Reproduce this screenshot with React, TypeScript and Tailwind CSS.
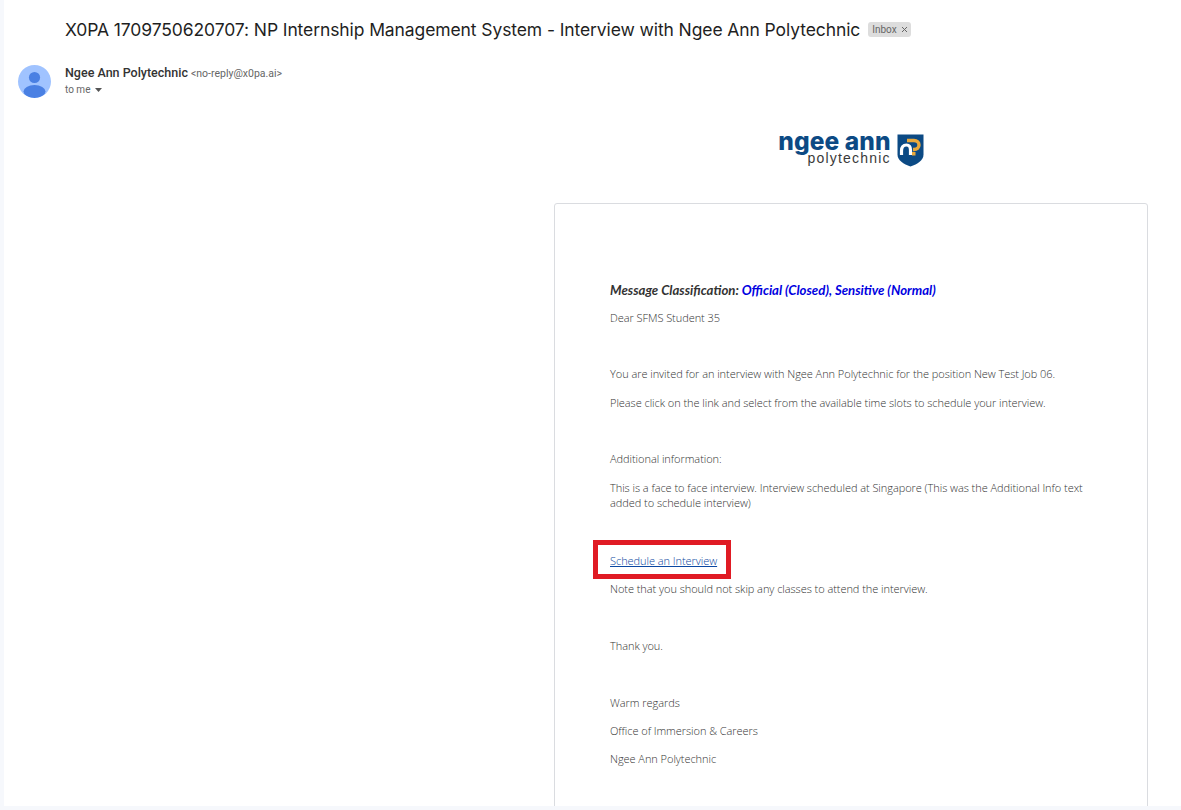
export default function App() {
  const body = "font-['Open_Sans',sans-serif] font-light text-[11px] tracking-[-0.05px] leading-[15px] text-[#333]";
  return (
    <div className="w-[1181px] h-[810px] overflow-hidden bg-[#f6f8fc] pl-[4px] pb-[4px]">
      <div className="h-full bg-white flex flex-col overflow-hidden">
        <div className="flex items-center pl-[61px] pt-[19px] h-[41px] shrink-0">
          <h1 className="font-['Inter',sans-serif] text-[17.5px] tracking-[-0.1px] leading-[22px] font-normal text-[#1f1f1f] whitespace-nowrap">
            X0PA 1709750620707: NP Internship Management System - Interview with Ngee Ann Polytechnic
          </h1>
          <span className="ml-[8px] mt-[-1px] flex items-center h-[15px] pl-[4px] pr-[3px] rounded-[3px] bg-[#dddddd] text-[#666] text-[10px] font-['Roboto',sans-serif]">
            Inbox
            <svg width="7" height="7" viewBox="0 0 7 7" className="ml-[4px]" fill="none" stroke="#666" strokeWidth="1">
              <path d="M1 1l5 5M6 1l-5 5" />
            </svg>
          </span>
        </div>
        <div className="flex pl-[14px] pt-[24px] shrink-0">
          <svg width="33" height="33" viewBox="0 0 33 33" className="shrink-0">
            <defs>
              <clipPath id="avatar"><circle cx="16.5" cy="16.5" r="16.5" /></clipPath>
            </defs>
            <g clipPath="url(#avatar)">
              <rect width="33" height="33" fill="#a0c3ff" />
              <circle cx="16.5" cy="12.5" r="5.6" fill="#4a80e3" />
              <ellipse cx="16.5" cy="26.5" rx="11" ry="6.5" fill="#4a80e3" />
            </g>
          </svg>
          <div className="ml-[14px] font-['Roboto',sans-serif]">
            <div className="flex items-baseline h-[16px] leading-[16px] whitespace-nowrap">
              <span className="text-[12.5px] font-medium text-[#333]">Ngee Ann Polytechnic</span>
              <span className="ml-[3px] text-[10.5px] text-[#666]">&lt;no-reply@x0pa.ai&gt;</span>
            </div>
            <div className="flex items-center h-[16px] text-[10px] text-[#666]">
              to me
              <svg width="7" height="4" viewBox="0 0 7 4" className="ml-[5px] mt-[2px]"><path d="M0 0h7L3.5 4z" fill="#555" /></svg>
            </div>
          </div>
        </div>
        <div className="ml-[550px] w-[594px] flex flex-col shrink-0">
          <div className="flex justify-center items-start h-[105px] pt-[36px]">
            <div className="flex items-start">
              <div className="flex flex-col items-end mt-[-4px]">
                <span className="font-['Inter',sans-serif] font-extrabold text-[24.5px] leading-[22px] tracking-[0.1px] text-[#0c4a84]">ngee ann</span>
                <span className="font-['Liberation_Sans',sans-serif] text-[14px] leading-[14px] tracking-[1.2px] text-[#3a3a3a] mt-[-1px]">polytechnic</span>
              </div>
              <svg width="27" height="33" viewBox="0 0 27 33" className="ml-[6px]">
                <path d="M0.5 0.5h26v20c0 6-6 9.500-13 12-7-2.500-13-6-13-12z" fill="#0c4a84" />
                <path d="M4.500 21v-4c0-4 2-6 5-6s4 2 4 5v5" fill="none" stroke="#fff" strokeWidth="3.200" />
                <path d="M10 6.500h7c3 0 5 2 5 4.500s-2 4.500-5 4.500h-1" fill="none" stroke="#eaa93c" strokeWidth="3.400" />
                <rect x="15" y="18" width="3.500" height="3.500" fill="#eaa93c" />
              </svg>
            </div>
          </div>
          <div className="h-[700px] border border-[#dadce0] rounded-[3px] bg-white pl-[55px] pr-[50px] pt-[79px]">
            <p className="font-['Lato',sans-serif] italic font-bold text-[13.2px] leading-[15px] text-[#333] whitespace-nowrap">
              Message Classification: <span className="text-[#0000e0]">Official (Closed), Sensitive (Normal)</span>
            </p>
            <p className={`${body} mt-[12px]`}>Dear SFMS Student 35</p>
            <p className={`${body} mt-[41px]`}>You are invited for an interview with Ngee Ann Polytechnic for the position New Test Job 06.</p>
            <p className={`${body} mt-[14px]`}>Please click on the link and select from the available time slots to schedule your interview.</p>
            <p className={`${body} mt-[41px]`}>Additional information:</p>
            <p className={`${body} mt-[14px]`}>This is a face to face interview. Interview scheduled at Singapore (This was the Additional Info text added to schedule interview)</p>
            <div className="relative mt-[43px]">
              <a href="#" className={`${body} !text-[#0b47a1] underline block w-fit`}>Schedule an Interview</a>
              <div className="absolute left-[-17px] top-[-13px] w-[138px] h-[39px] border-[5px] border-[#e01b24]" />
            </div>
            <p className={`${body} mt-[13px]`}>Note that you should not skip any classes to attend the interview.</p>
            <p className={`${body} mt-[42px]`}>Thank you.</p>
            <p className={`${body} mt-[42px]`}>Warm regards</p>
            <p className={`${body} mt-[13px]`}>Office of Immersion &amp; Careers</p>
            <p className={`${body} mt-[13px]`}>Ngee Ann Polytechnic</p>
          </div>
        </div>
      </div>
    </div>
  );
}
